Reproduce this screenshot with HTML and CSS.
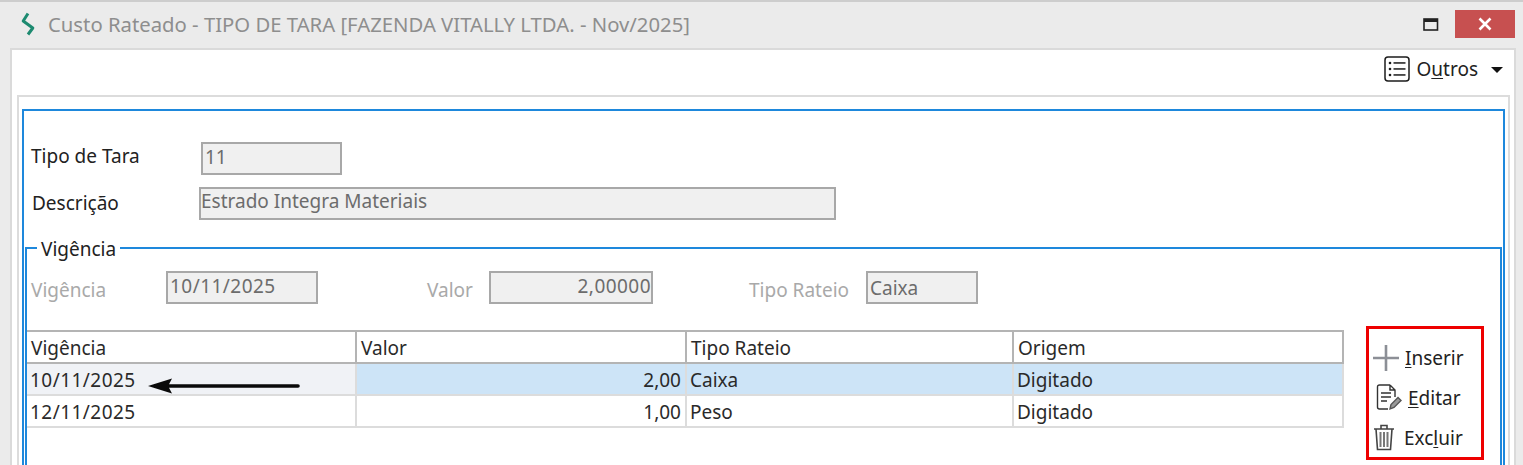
FILE: index.html
```html
<!DOCTYPE html>
<html lang="pt-BR">
<head>
<meta charset="utf-8">
<title>Custo Rateado</title>
<link rel="stylesheet" href="styles.css">
</head>
<body>
<div class="window">
  <header class="titlebar">
    <svg class="logo" width="16" height="24" viewBox="0 0 16 24"><path d="M8 1.5 3.2 9 12.8 16 8 22.5" fill="none" stroke="#1d8a70" stroke-width="3" stroke-linejoin="round"/></svg>
    <span class="title">Custo Rateado - TIPO DE TARA [FAZENDA VITALLY LTDA. - Nov/2025]</span>
    <svg class="maximize" width="16" height="13" viewBox="0 0 16 13"><rect x="1" y="1" width="13.5" height="11" fill="none" stroke="#222" stroke-width="1.6"/><rect x="1" y="1" width="13.5" height="3" fill="#222"/></svg>
    <div class="close"><svg width="16" height="14" viewBox="0 0 16 14"><path d="M2.5 1.5 13.5 12.5M13.5 1.5 2.5 12.5" stroke="#fff" stroke-width="2.6"/></svg></div>
  </header>
  <main class="content">
    <div class="toolbar">
      <svg width="26" height="26" viewBox="0 0 26 26"><rect x="1" y="1" width="24" height="24" rx="3" fill="none" stroke="#1c1c1c" stroke-width="1.5"/><g fill="#1c1c1c"><circle cx="6" cy="7" r="1.3"/><circle cx="6" cy="13" r="1.3"/><circle cx="6" cy="19" r="1.3"/><rect x="9.5" y="6.2" width="12" height="1.5"/><rect x="9.5" y="12.2" width="12" height="1.5"/><rect x="9.5" y="18.2" width="12" height="1.5"/></g></svg>
      <span class="menu-label">O<u>u</u>tros</span>
      <span class="caret"></span>
    </div>
    <div class="inner">
      <div class="blue">
        <div class="row row-tipo">
          <span class="label w-tipo">Tipo de Tara</span>
          <span class="field f-tipo">11</span>
        </div>
        <div class="row row-desc">
          <span class="label w-desc">Descrição</span>
          <span class="field f-desc">Estrado Integra Materiais</span>
        </div>
        <fieldset class="group">
          <legend>Vigência</legend>
          <div class="row row-vig">
            <span class="label muted w-vig">Vigência</span>
            <span class="field f-vig digits">10/11/2025</span>
            <span class="label muted w-valor">Valor</span>
            <span class="field f-valor digits">2,00000</span>
            <span class="label muted w-rateio">Tipo Rateio</span>
            <span class="field f-rateio">Caixa</span>
          </div>
          <div class="lower">
            <div class="table">
              <div class="tr head">
                <div>Vigência</div><div>Valor</div><div>Tipo Rateio</div><div>Origem</div>
              </div>
              <div class="tr sel">
                <div class="first digits">10/11/2025</div><div class="num">2,00</div><div>Caixa</div><div>Digitado</div>
              </div>
              <div class="tr">
                <div class="digits">12/11/2025</div><div class="num">1,00</div><div>Peso</div><div>Digitado</div>
              </div>
              <svg class="arrow" width="154" height="16" viewBox="0 0 154 16"><path d="M0 8 24 .5 21 6.2H150a1.8 1.8 0 0 1 0 3.6H21L24 15.5Z" fill="#0a0a0a"/></svg>
            </div>
            <div class="actions">
              <div class="action a1">
                <svg width="26" height="26" viewBox="0 0 26 26"><path d="M0 13H26M13 0V26" stroke="#8c8f96" stroke-width="2.6"/></svg>
                <span><u>I</u>nserir</span>
              </div>
              <div class="action a2">
                <svg width="26" height="27" viewBox="0 0 26 27"><g fill="none" stroke="#333" stroke-width="1.4"><path d="M14 1H3.5Q1.5 1 1.5 3V23Q1.5 25 3.5 25H12M14 1 19 6V13M14 1V6H19"/><path d="M5 9H15M5 13H15M5 17H11" stroke-width="1.3"/><path d="M14 25 15 20.5 22 13.5 25 16.5 18 23.5Z" fill="#999" stroke="#555"/></g></svg>
                <span><u>E</u>ditar</span>
              </div>
              <div class="action a3">
                <svg width="22" height="27" viewBox="0 0 22 27"><g fill="none" stroke="#444" stroke-width="1.6"><path d="M1 5H21M8 5V1.5H14V5M3 5 4.5 25.5H17.5L19 5"/><path d="M7.5 8V23M11 8V23M14.5 8V23" stroke-width="2" stroke="#777"/></g></svg>
                <span>Exc<u>l</u>uir</span>
              </div>
            </div>
          </div>
        </fieldset>
      </div>
    </div>
  </main>
</div>
</body>
</html>
```

FILE: styles.css
```css
* { box-sizing: border-box; }
html, body { margin: 0; height: 465px; overflow: hidden; }
body { background: #ebebeb; font-family: "Noto Sans", "Open Sans", sans-serif; font-size: 19px; color: #2a2a2a; }
u { text-underline-offset: 2px; text-decoration-thickness: 1px; }
.digits { letter-spacing: .45px; }
.window { height: 465px; border-top: 2px solid #cdcdcd; display: flex; flex-direction: column; overflow: hidden; }
.titlebar { height: 46px; flex: none; display: flex; align-items: center; padding: 0 8px 0 20px; }
.logo { flex: none; margin-top: -3px; }
.title { margin-left: 12px; font-size: 20.3px; color: #8e8e8e; flex: 1; white-space: nowrap; margin-top: -3px; }
.maximize { margin-right: 16px; margin-top: -2px; }
.close { width: 60px; height: 28px; background: #c75050; display: flex; align-items: center; justify-content: center; margin-top: -2px; }
.content { flex: 1; margin: 0 7px 0 10px; background: #fff; border: 2px solid #dadada; border-bottom: 0; padding: 0 4px 0 5px; display: flex; flex-direction: column; min-height: 0; }
.toolbar { height: 45px; flex: none; display: flex; align-items: center; justify-content: flex-end; padding: 0 7px 8px 0; color: #222; }
.menu-label { margin-left: 6px; }
.caret { margin-left: 13px; margin-top: 2px; width: 0; height: 0; border-style: solid; border-width: 6px 6.5px 0; border-color: #111 transparent transparent; }
.inner { flex: 1; border: 2px solid #dcdcdc; border-bottom: 0; padding: 12px 3px 0 3px; min-height: 0; }
.blue { height: 600px; border: 2px solid #1e88dc; padding: 0 1px; }
.row { display: flex; align-items: center; }
.row-tipo { height: 33px; margin-top: 31px; padding-left: 6px; }
.row-desc { height: 33px; margin-top: 12px; padding-left: 7px; }
.label { flex: none; color: #222; white-space: nowrap; }
.muted { color: #a9a9a9; padding-top: 4px; }
.w-tipo { width: 170px; padding-bottom: 5px; }
.w-desc { width: 167px; padding-bottom: 2px; }
.w-vig { width: 135px; }
.w-valor { width: 62px; margin-left: 109px; }
.w-rateio { width: 117px; margin-left: 96px; }
.field { flex: none; height: 33px; background: #f0f0f0; border: 2px solid #a8a8a8; color: #6c6c6c; padding: 0 2px; line-height: 24px; white-space: nowrap; }
.f-tipo { width: 141px; line-height: 27px; }
.f-desc { width: 637px; padding-left: 0; }
.f-vig { width: 152px; line-height: 26px; }
.f-valor { width: 164px; text-align: right; padding-right: 0; line-height: 26px; }
.f-rateio { width: 112px; line-height: 30px; }
.group { margin: 17px 0 0; padding: 0; border: 2px solid #1e88dc; height: 400px; min-width: 0; }
.group legend { margin-left: 10px; padding: 2px 4px 0 4px; line-height: 20px; color: #222; }
.row-vig { margin-top: 12px; padding-left: 4px; }
.lower { display: flex; align-items: flex-start; margin-top: 26px; }
.table { position: relative; width: 1317px; flex: none; border-top: 2px solid #b4b4b4; }
.tr { display: grid; grid-template-columns: 330px 330px 327px 330px; height: 32px; border-bottom: 2px solid #dcdcdc; line-height: 32px; }
.tr > div { padding: 0 4px 0 3px; border-right: 2px solid #dcdcdc; white-space: nowrap; overflow: hidden; }
.tr > .num { text-align: right; }
.head { height: 32px; border-bottom: 2px solid #b4b4b4; line-height: 33px; }
.head > div { border-right-color: #b4b4b4; padding-left: 4px; }
.sel { background: #cde4f7; }
.sel > .first { background: #f0f2f6; }
.arrow { position: absolute; left: 121px; top: 46px; }
.actions { margin: -4px 0 0 22px; width: 118px; height: 134px; border: 3px solid #ee0000; flex: none; padding-top: 16px; }
.action { display: flex; align-items: center; color: #222; }
.a1 { gap: 6px; padding-left: 4px; height: 26px; }
.a2 { gap: 6px; padding-left: 7px; margin-top: 13px; height: 27px; }
.a3 { gap: 9px; padding-left: 4px; margin-top: 13px; height: 27px; }
```
